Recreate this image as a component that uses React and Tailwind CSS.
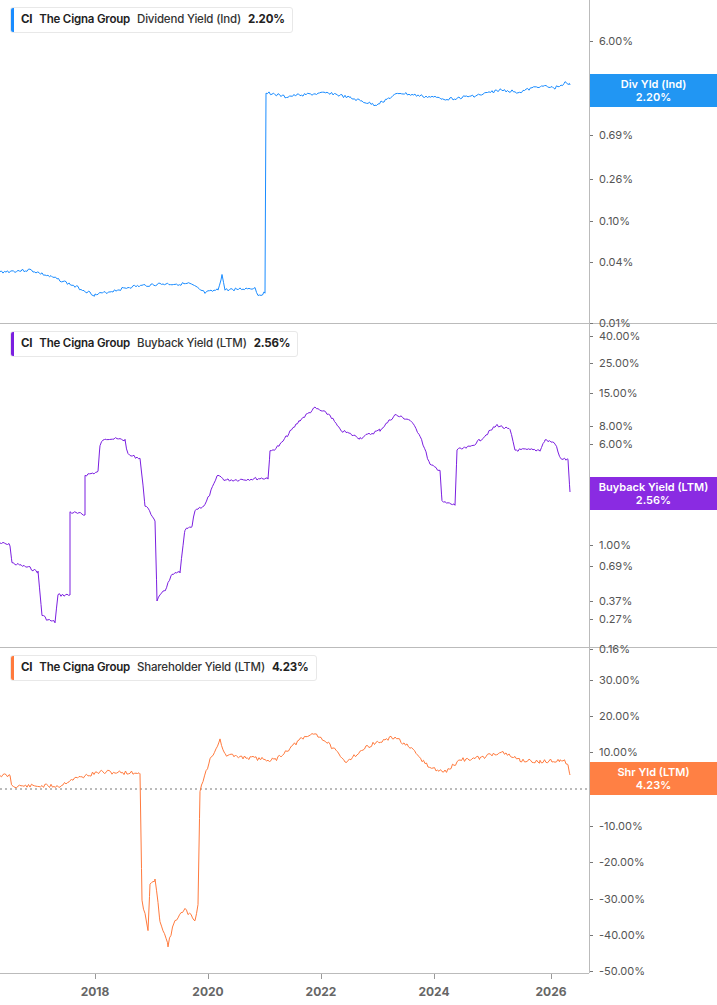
import React from "react";

function rnd(seed){let s=seed;return()=>{s=(s*9301+49297)%233280;return s/233280;};}
function build(pts, amp, seed){
  const r=rnd(seed);const out=[];
  for(let i=0;i<pts.length-1;i++){
    const [x1,y1]=pts[i],[x2,y2]=pts[i+1];
    if(x2===x1){out.push([x1,y1]);continue;}
    for(let x=x1;x<x2;x+=1.5){
      const t=(x-x1)/(x2-x1);
      out.push([x,y1+(y2-y1)*t+(r()-0.5)*amp]);
    }
  }
  out.push(pts[pts.length-1]);
  return out.map(p=>p[0].toFixed(1)+","+p[1].toFixed(1)).join(" ");
}

const blue=[[0,272],[30,270],[60,280],[95,295],[130,287],[160,284],[190,284],[205,293],[218,290],[222,275],[225,290],[255,288],[258,295],[265,293],[266,92],[285,97],[300,95],[330,93],[350,98],[375,105],[400,93],[420,96],[450,99],[480,95],[500,90],[520,92],[540,86],[555,88],[565,83],[570,85]];
const purple=[[0,543],[10,545],[12,563],[30,568],[38,572],[42,615],[48,620],[55,622],[58,595],[70,595],[70,512],[85,515],[85,475],[98,472],[100,445],[105,438],[125,440],[128,455],[140,458],[145,505],[155,520],[157,600],[165,590],[172,575],[180,572],[185,530],[192,527],[195,510],[205,505],[218,475],[225,480],[230,480],[268,478],[270,452],[280,445],[290,432],[300,420],[315,408],[330,415],[340,430],[360,438],[380,430],[395,415],[410,420],[420,435],[430,465],[440,470],[442,502],[455,505],[457,450],[470,447],[480,440],[497,425],[510,430],[515,450],[540,450],[545,440],[555,443],[560,458],[568,460],[570,492]];
const orange=[[0,775],[10,776],[12,786],[60,786],[70,780],[100,772],[140,773],[142,900],[148,930],[150,885],[155,880],[160,920],[168,945],[175,920],[185,910],[195,920],[198,905],[200,790],[210,760],[220,740],[225,755],[250,758],[275,760],[300,740],[315,733],[330,745],[345,762],[370,745],[395,737],[410,748],[430,768],[445,772],[460,760],[480,758],[500,752],[520,760],[540,762],[560,760],[568,763],[570,775]];

function Legend({color,label,value}){
  return (
    <div className="absolute left-[10px] top-[7px] flex items-center h-[26px] bg-white border border-[#e8e8e8] rounded-[3px] overflow-hidden text-[11.5px] tracking-[-0.2px]">
      <div className="w-[3px] h-full" style={{background:color}} />
      <div className="flex items-center gap-[7px] px-[7px] text-[#222]">
        <span className="font-bold">CI</span>
        <span className="font-semibold">The Cigna Group</span>
        <span className="font-medium text-[#333]">{label}</span>
        <span className="font-bold">{value}</span>
      </div>
    </div>
  );
}

function Axis({ticks,badge,top}){
  return (
    <div className="relative w-[128px] border-l border-[#bbb] h-full">
      {ticks.map(([t,y])=>(
        <div key={t} className="absolute left-0 flex items-center" style={{top:y-top-7}}>
          <div className="w-[3px] h-[1px] bg-[#777]" />
          <span className="ml-[6px] text-[11px] text-[#555] leading-[14px]">{t}</span>
        </div>
      ))}
      <div className="absolute left-0 right-0 flex flex-col items-center justify-center text-white text-[11px] font-semibold leading-[13px] h-[33px]" style={{top:badge.y-top,background:badge.c}}>
        <span>{badge.l}</span><span>{badge.v}</span>
      </div>
    </div>
  );
}

function Panel({top,h,pts,color,seed,amp,ticks,badge,legend,zero,last}){
  return (
    <div className={"flex relative "+(last?"":"border-b border-[#bbb]")} style={{height:h}}>
      <div className="flex-1 relative">
        <svg width="589" height={h} className="absolute inset-0">
          {zero && <line x1="0" x2="589" y1={zero-top} y2={zero-top} stroke="#777" strokeDasharray="2 3" />}
          <g transform={`translate(0,${-top})`}>
            <polyline points={build(pts,amp,seed)} fill="none" stroke={color} strokeWidth="1" />
          </g>
        </svg>
        <Legend {...legend} color={color} />
      </div>
      <Axis ticks={ticks} badge={badge} top={top} />
    </div>
  );
}

export default function App(){
  return (
    <div className="w-[717px] h-[1005px] bg-white overflow-hidden" style={{fontFamily:"Inter, 'Liberation Sans', sans-serif"}}>
      <Panel top={0} h={324} pts={blue} color="#1a8cff" seed={3} amp={3}
        legend={{label:"Dividend Yield (Ind)",value:"2.20%"}}
        ticks={[["6.00%",41],["2.00%",89],["0.69%",135],["0.26%",179],["0.10%",221],["0.04%",262],["0.01%",323]]}
        badge={{y:74,c:"#2196f3",l:"Div Yld (Ind)",v:"2.20%"}} />
      <Panel top={324} h={324} pts={purple} color="#7b1fe0" seed={7} amp={3}
        legend={{label:"Buyback Yield (LTM)",value:"2.56%"}}
        ticks={[["40.00%",336],["25.00%",363],["15.00%",393],["8.00%",426],["6.00%",444],["2.00%",506],["1.00%",545],["0.69%",566],["0.37%",601],["0.27%",619],["0.16%",649]]}
        badge={{y:477,c:"#8a2be2",l:"Buyback Yield (LTM)",v:"2.56%"}} />
      <Panel top={648} h={325} pts={orange} color="#ff7a3d" seed={11} amp={4} zero={789} last
        legend={{label:"Shareholder Yield (LTM)",value:"4.23%"}}
        ticks={[["30.00%",680],["20.00%",716],["10.00%",752],["0.00%",789],["-10.00%",826],["-20.00%",862],["-30.00%",899],["-40.00%",935],["-50.00%",971]]}
        badge={{y:762,c:"#ff8044",l:"Shr Yld (LTM)",v:"4.23%"}} />
      <div className="relative h-[32px] border-t border-[#bbb] w-[589px]">
        {[["2018",95],["2020",208],["2022",321],["2024",434],["2026",551]].map(([t,x])=>(
          <div key={t} className="absolute top-0 flex flex-col items-center" style={{left:x-20,width:40}}>
            <div className="w-[1px] h-[5px] bg-[#999]" />
            <span className="text-[12px] font-bold text-[#666] mt-[4px]">{t}</span>
          </div>
        ))}
      </div>
    </div>
  );
}
